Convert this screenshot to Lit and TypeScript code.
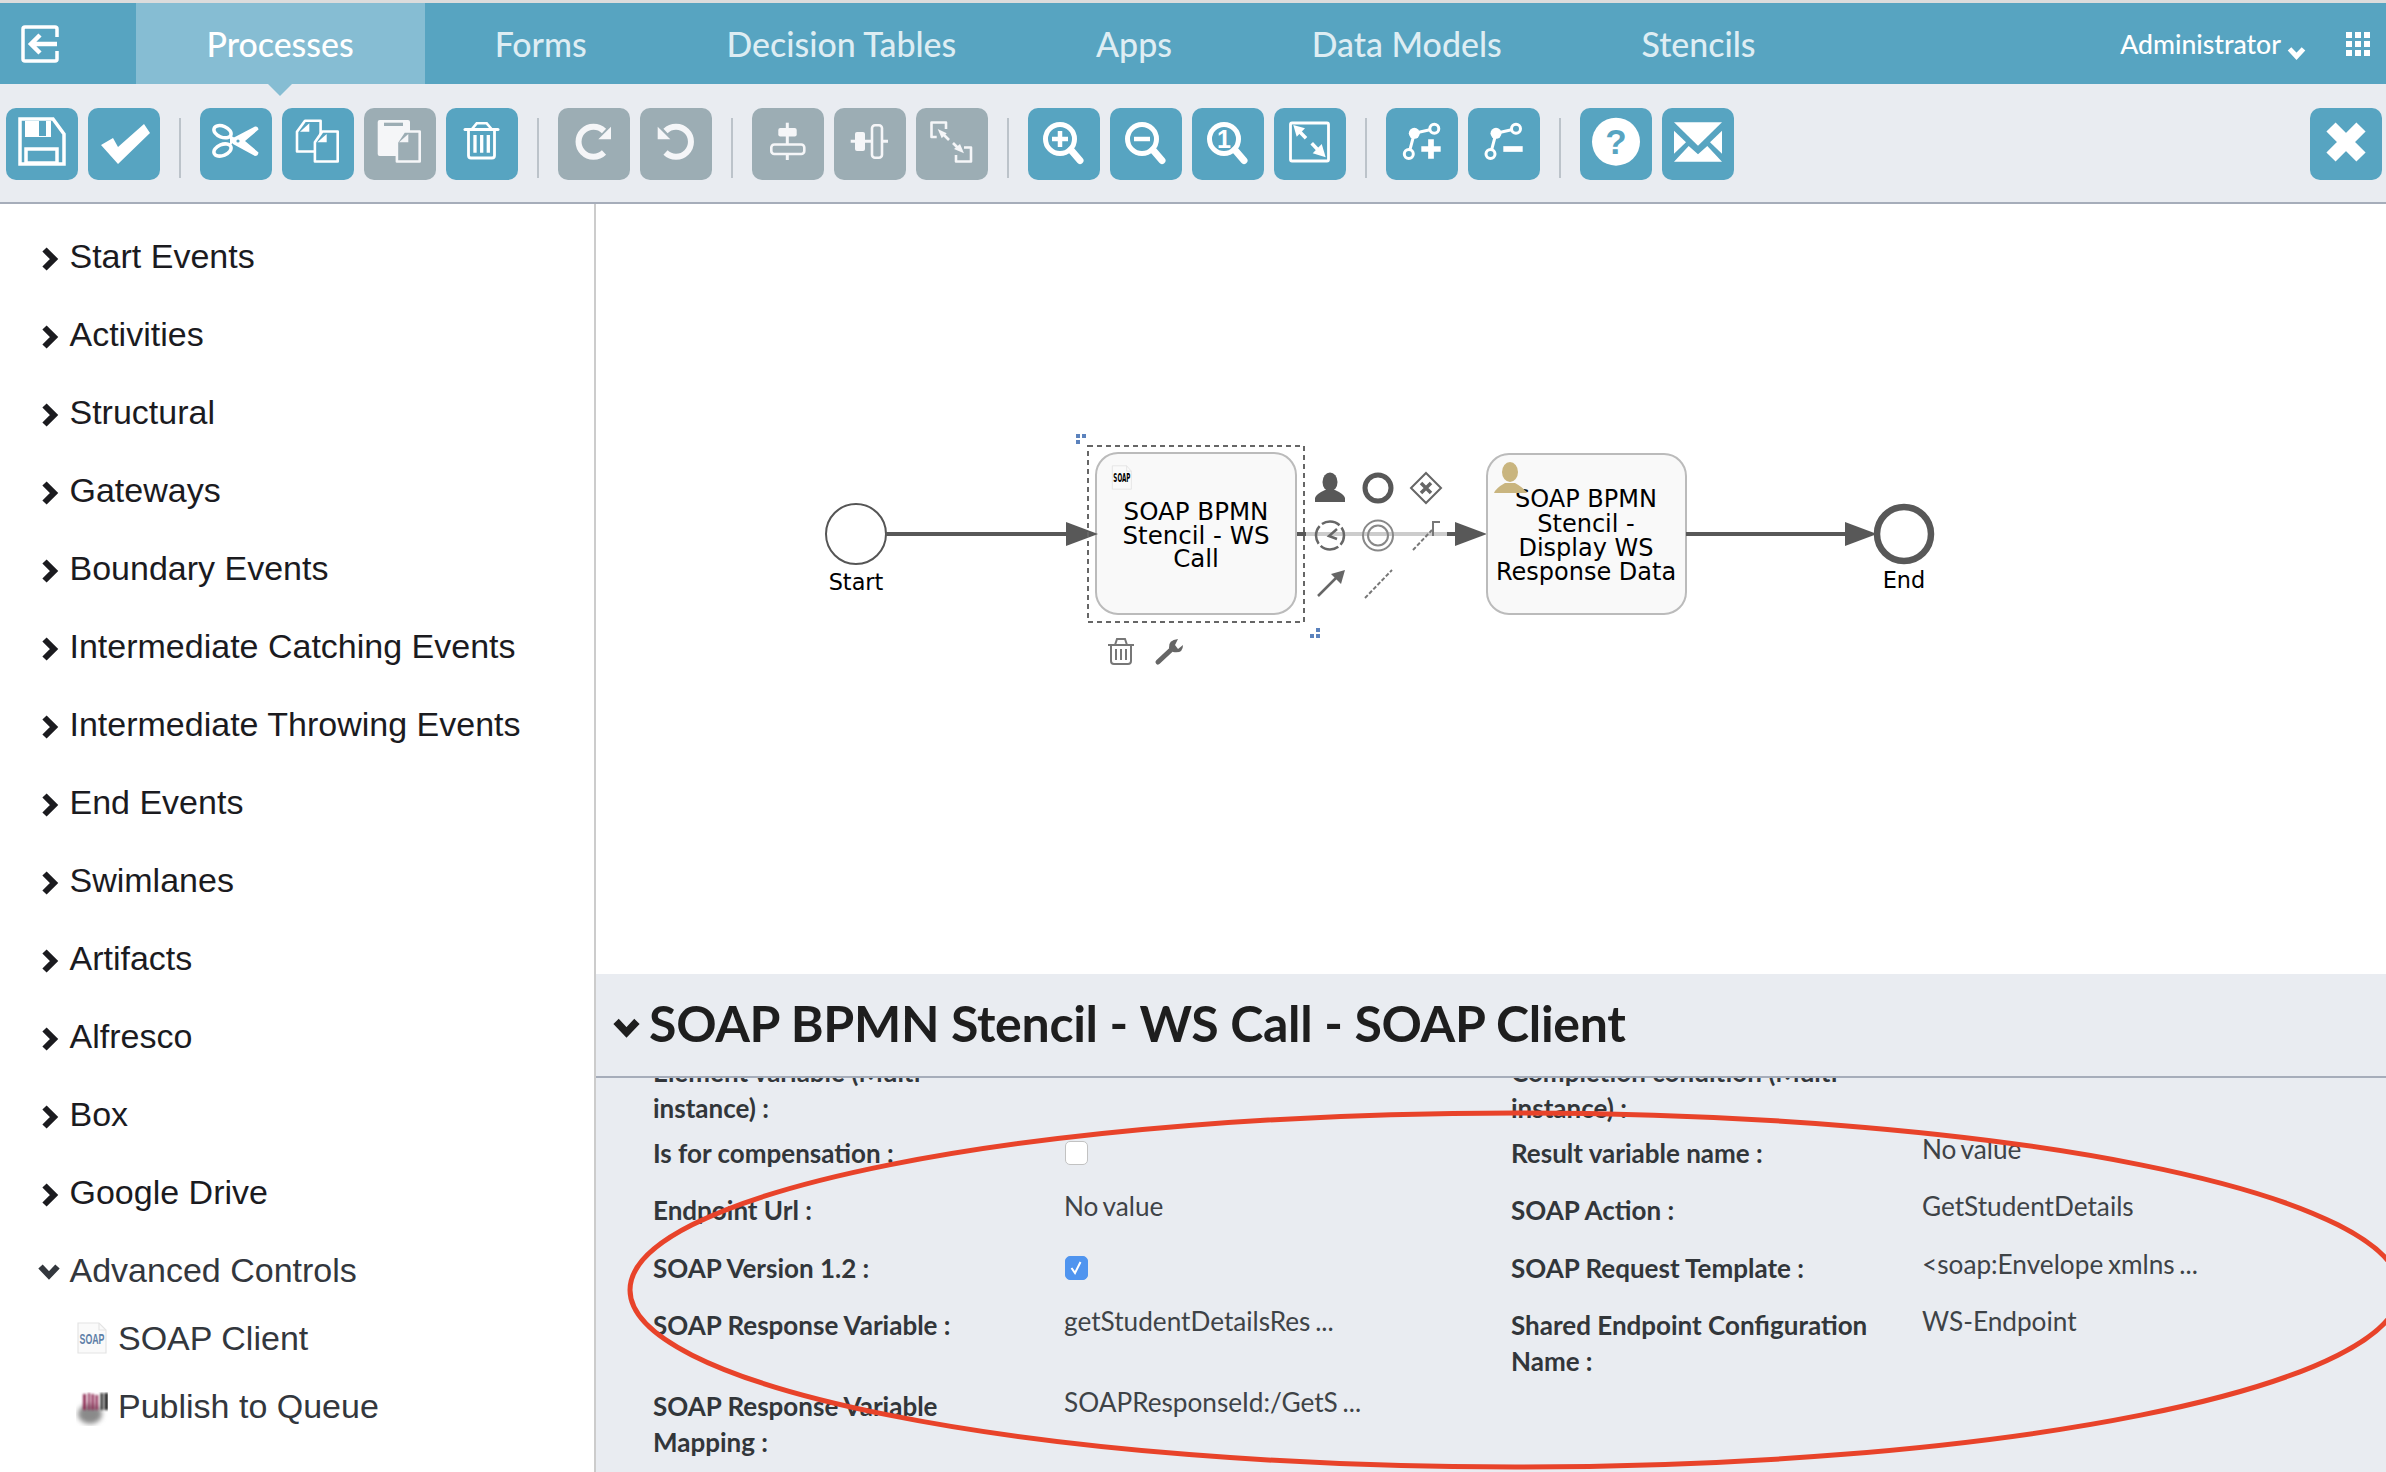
import { LitElement, html, css, svg } from "lit";
import { customElement } from "lit/decorators.js";

const W = "#fff";
const G = "#f5f6f8";
const BL = "#57a4c1";
const GR = "#9cadb4";
const zoomBase = svg`<circle cx="32" cy="31" r="14.5" fill="none" stroke="${W}" stroke-width="5"/><path d="M43 42 L52 52.5" stroke="${W}" stroke-width="7" stroke-linecap="round"/>`;
const bendBase = (x: number) => svg`<path d="M${x + 25.5} 20.7L${x + 5.5} 25.3L${x} 46" fill="none" stroke="${W}" stroke-width="3"/><circle cx="${x + 25.5}" cy="20.7" r="4.5" fill="${BL}" stroke="${W}" stroke-width="3"/><circle cx="${x + 5.5}" cy="25.3" r="5.5" fill="${W}"/><circle cx="${x}" cy="46" r="4.5" fill="${BL}" stroke="${W}" stroke-width="3"/>`;

const icons: Record<string, unknown> = {
  save: svg`<path d="M14 11H47L58 26V56H14Z" fill="none" stroke="${W}" stroke-width="3.5"/><path d="M19 13H33V28H40V13H45V29H19Z" fill="${W}"/><rect x="20" y="41" width="31" height="14" fill="none" stroke="${W}" stroke-width="3.5"/>`,
  ok: svg`<polygon points="13,37 25,30 30,39 56,16 62,25 30,56" fill="${W}"/>`,
  cut: svg`<ellipse cx="22.5" cy="23.7" rx="9" ry="5.5" transform="rotate(22 22.5 23.7)" fill="none" stroke="${W}" stroke-width="3.5"/><ellipse cx="22.5" cy="42" rx="9" ry="5.5" transform="rotate(-22 22.5 42)" fill="none" stroke="${W}" stroke-width="3.5"/><path d="M30 27L38 32L30 37Z" fill="${W}"/><path d="M33 30L55 18.5Q58 18 58.5 21.5L45 33L58.5 44.5Q58 48 55 48L33 36Z" fill="${W}"/><circle cx="38" cy="33" r="1.6" fill="${BL}"/>`,
  copy: svg`<path d="M23 12.8H38.6V43.5H15V23.7Z" fill="none" stroke="${W}" stroke-width="2.6" stroke-linejoin="round"/><polygon points="18,23.7 27.3,23.7 27.3,15.3" fill="${W}"/><path d="M40.3 23.5H55.7V53.5H32.9V34.3Z" fill="${BL}" stroke="${W}" stroke-width="2.6" stroke-linejoin="round"/><polygon points="35.3,34.3 44.7,34.3 44.7,26" fill="${W}"/>`,
  paste: svg`<rect x="13.7" y="12" width="32.3" height="36" rx="2" fill="${G}"/><rect x="20" y="14.7" width="19" height="3.3" fill="${GR}"/><path d="M40 23.5H55.7V53.5H32.9V34.3Z" fill="${GR}" stroke="${G}" stroke-width="2.6" stroke-linejoin="round"/><polygon points="35,34.3 44.3,34.3 44.3,26" fill="${G}"/>`,
  trash: svg`<path d="M26 21L30.7 15.3H40.7L45.5 21" fill="none" stroke="${W}" stroke-width="2.6"/><path d="M19 21.5H52" stroke="${W}" stroke-width="3" stroke-linecap="round"/><path d="M22.5 23V47.5Q22.5 50 25 50H46Q48.5 50 48.5 47.5V23" fill="none" stroke="${W}" stroke-width="2.8"/><path d="M29 27V44.7M35.7 27V44.7M42.3 27V44.7" stroke="${W}" stroke-width="3.3"/>`,
  redo: svg`<path d="M46 23A15 15 0 1 0 46 44.5" fill="none" stroke="${G}" stroke-width="6"/><polygon points="53,18.7 53,31.3 40.3,31.3" fill="${G}"/>`,
  undo: svg`<path d="M25.5 23A15 15 0 1 1 25.5 44.5" fill="none" stroke="${G}" stroke-width="6"/><polygon points="17.7,18.7 17.7,31.3 30.3,31.3" fill="${G}"/>`,
  alignH: svg`<path d="M35.3 14.7V52" stroke="${G}" stroke-width="3"/><rect x="26.3" y="20" width="18.4" height="8.5" rx="2" fill="${G}"/><rect x="19.3" y="36.5" width="33" height="9.5" rx="3" fill="${GR}" stroke="${G}" stroke-width="2.6"/>`,
  alignV: svg`<path d="M16.7 33.3H54" stroke="${G}" stroke-width="3"/><rect x="21" y="24" width="10" height="19" rx="2" fill="${G}"/><rect x="38" y="17.3" width="10" height="32.5" rx="3" fill="${GR}" stroke="${G}" stroke-width="2.6"/>`,
  same: svg`<path d="M20.7 29H15.5V14.5H30V21" fill="none" stroke="${G}" stroke-width="2.6" stroke-linejoin="round"/><path d="M48 39.5H55V53.5H40V47" fill="none" stroke="${G}" stroke-width="2.6" stroke-linejoin="round"/><polygon points="21.7,21 30.7,25.3 25.7,30.3" fill="${G}"/><path d="M27 26L33 32" stroke="${G}" stroke-width="2.6"/><polygon points="48,45.3 38,41 44,36" fill="${G}"/><path d="M37 35L43 41" stroke="${G}" stroke-width="2.6"/>`,
  zoomIn: svg`${zoomBase}<path d="M24 31H40M32 23V39" stroke="${W}" stroke-width="4.5"/>`,
  zoomOut: svg`${zoomBase}<path d="M24 31H40" stroke="${W}" stroke-width="4.5"/>`,
  zoom1: svg`${zoomBase}<text x="32" y="40" text-anchor="middle" font-family="Liberation Sans" font-size="25" font-weight="700" fill="${W}">1</text>`,
  fit: svg`<rect x="16.5" y="15" width="38" height="38" rx="1.5" fill="none" stroke="${W}" stroke-width="2.8"/><polygon points="19.3,17 31,20.3 22.7,28.7" fill="${W}"/><path d="M25 23L32 30.3" stroke="${W}" stroke-width="3.5"/><polygon points="51.7,49.3 38.7,45.3 47.7,36" fill="${W}"/><path d="M37.7 35.3L45 43" stroke="${W}" stroke-width="3.5"/>`,
  bendAdd: svg`${bendBase(22.8)}<path d="M35.3 41H54.7M45 31.3V50.7" stroke="${W}" stroke-width="5.7"/>`,
  bendDel: svg`${bendBase(22.5)}<path d="M35.3 41H54.7" stroke="${W}" stroke-width="5.7"/>`,
  help: svg`<circle cx="36" cy="33.7" r="24" fill="${W}"/><text x="36" y="46" text-anchor="middle" font-family="Liberation Sans" font-size="35" font-weight="700" fill="${BL}">?</text>`,
  mail: svg`<polygon points="12,14.3 60,14.3 36,37.7" fill="${W}"/><polygon points="12,22.7 24,34.3 12,45.7" fill="${W}"/><polygon points="60,22.7 48,34.3 60,45.7" fill="${W}"/><polygon points="12,53.7 26.7,38 36,46.3 45.3,38 60,53.7" fill="${W}"/>`,
  close: svg`<path d="M21 19L51 49M51 19L21 49" stroke="${W}" stroke-width="13"/>`,
};

type Tool = { i: string; gray?: boolean } | "sep";
const tools: Tool[] = [
  { i: "save" }, { i: "ok" }, "sep",
  { i: "cut" }, { i: "copy" }, { i: "paste", gray: true }, { i: "trash" }, "sep",
  { i: "redo", gray: true }, { i: "undo", gray: true }, "sep",
  { i: "alignH", gray: true }, { i: "alignV", gray: true }, { i: "same", gray: true }, "sep",
  { i: "zoomIn" }, { i: "zoomOut" }, { i: "zoom1" }, { i: "fit" }, "sep",
  { i: "bendAdd" }, { i: "bendDel" }, "sep",
  { i: "help" }, { i: "mail" },
];

const groups = ["Start Events", "Activities", "Structural", "Gateways", "Boundary Events", "Intermediate Catching Events",
  "Intermediate Throwing Events", "End Events", "Swimlanes", "Artifacts", "Alfresco", "Box", "Google Drive"];

const rows: [string, unknown, string, unknown][] = [
  ["Element variable (Multi-instance) :", "No value", "Completion condition (Multi-instance) :", "No value"],
  ["Is for compensation :", "off", "Result variable name :", "No value"],
  ["Endpoint Url :", "No value", "SOAP Action :", "GetStudentDetails"],
  ["SOAP Version 1.2 :", "on", "SOAP Request Template :", "<soap:Envelope xmlns ..."],
  ["SOAP Response Variable :", "getStudentDetailsRes ...", "Shared Endpoint Configuration Name :", "WS-Endpoint"],
  ["SOAP Response Variable Mapping :", "SOAPResponseId:/GetS ...", "", ""],
];

const soapIcon = svg`<path d="M2 1H23L30 8V31H2Z" fill="#fafafa" stroke="#e4e4e4" stroke-width="1.2"/><path d="M23 1V8H30" fill="none" stroke="#e4e4e4" stroke-width="1.2"/><text x="16" y="21.5" text-anchor="middle" font-family="Liberation Sans" font-size="15" font-weight="700" textLength="25" lengthAdjust="spacingAndGlyphs" fill="#5f80a8">SOAP</text>`;

@customElement("app-root")
export class AppRoot extends LitElement {
  static styles = css`
    :host { display: block; position: relative; width: 2386px; height: 1472px; overflow: hidden; background: #fff; font-family: "Liberation Sans", Arial, sans-serif; }
    .page { display: flex; flex-direction: column; height: 100%; }
    .strip { height: 3px; background: #dcdcdc; flex: none; }
    .nav { flex: none; height: 81px; background: #57a4c1; display: flex; align-items: stretch; position: relative; font-family: Lato, sans-serif; }
    .back { width: 136px; display: flex; align-items: center; padding-left: 20px; box-sizing: border-box; }
    .tab { display: flex; align-items: center; padding: 0 69.9px; font-size: 33.9px; font-weight: 500; color: #deedf3; position: relative; }
    .tab.on { background: #86bdd3; color: #fff; padding-right: 71px; padding-left: 70.5px; }
    .tab.on::after { content: ""; position: absolute; left: 50%; margin-left: -12px; top: 100%; border: 12px solid transparent; border-top-color: #86bdd3; border-bottom: 0; }
    .user { margin-left: auto; display: flex; align-items: center; color: #fff; font-size: 26.6px; font-weight: 500; padding-right: 16px; }
    .user .chev { margin: 12px 40px 0 6px; }
    .grid9 { display: grid; grid-template-columns: repeat(3, 6px); gap: 3px; }
    .grid9 i { width: 6px; height: 6px; background: #fff; display: block; }
    .toolbar { flex: none; box-sizing: border-box; height: 120px; background: #e9ecf1; border-bottom: 2px solid #a6adba; display: flex; align-items: flex-start; gap: 10px; padding: 24px 4px 0 6px; }
    .btn { width: 72px; height: 72px; border-radius: 10px; background: #57a4c1; flex: none; }
    .btn.gray { background: #9cadb4; }
    .btn svg { display: block; width: 72px; height: 72px; }
    .sep { width: 2px; height: 60px; margin: 10px 9px 0; background: #bcc3ca; flex: none; }
    .close { margin-left: auto; }
    .main { flex: 1; display: flex; min-height: 0; }
    .side { flex: none; box-sizing: border-box; width: 596px; border-right: 2px solid #ccc; padding-top: 13px; font-size: 34px; color: #1b1b1f; }
    .grp { height: 78px; display: flex; align-items: center; padding-left: 41px; }
    .grp svg { flex: none; margin: 5px 10.5px 0 0; }
    .grp.open { color: #33373d; padding-left: 38px; }
    .grp.open svg { margin: 3px 9.5px 0 0; }
    .subs { margin-top: -5px; color: #33373d; }
    .sub { height: 68px; display: flex; align-items: center; padding-left: 76px; gap: 10px; }
    .sub svg { flex: none; }
    .sub svg.pub { margin-top: 6px; }
    .right { flex: 1; display: flex; flex-direction: column; min-width: 0; }
    .canvas { flex: none; height: 770px; }
    .canvas svg { display: block; }
    .canvas text { font-family: "DejaVu Sans", sans-serif; fill: #000; text-anchor: middle; }
    .panel { flex: 1; background: #e9ecf1; display: flex; flex-direction: column; min-height: 0; font-family: Lato, sans-serif; }
    .head { flex: none; box-sizing: border-box; height: 104px; border-bottom: 2px solid #a6adba; display: flex; align-items: center; padding: 0 0 4px 17px; gap: 9px; font-size: 50px; letter-spacing: -0.3px; font-weight: 700; color: #1e1e1e; }
    .head svg { margin-top: 8px; }
    .fields { flex: 1; overflow: hidden; }
    .inner { margin-top: -24.5px; padding-left: 57px; }
    .row { display: grid; grid-template-columns: 412px 446px 412px 1fr; min-height: 57.5px; align-items: start; }
    .lab { width: 375px; font-size: 26px; line-height: 36px; font-weight: 700; color: #32363a; padding-bottom: 9px; }
    .val { font-size: 26.2px; line-height: 36px; word-spacing: -2px; color: #3e4347; margin: -4px 0 0 -1px; }
    .cb { display: block; box-sizing: border-box; width: 23px; height: 24px; border-radius: 5px; margin: 10px 0 0 1px; background: #fff; border: 1.5px solid #c2c2c2; }
    .cb.on { background: #4f94ef; border-color: #4f94ef; }
    .cb svg { display: block; }
    .mark { position: absolute; left: 0; top: 0; pointer-events: none; }
  `;

  private chevR() {
    return html`<svg width="18" height="24" viewBox="0 0 18 24"><path d="M3.5 2.5L13 12L3.5 21.5" fill="none" stroke="currentColor" stroke-width="6"/></svg>`;
  }
  private chevD(w = 22, h = 17, sw = 6) {
    return html`<svg width="${w}" height="${h}" viewBox="0 0 22 17"><path d="M2.5 3.5L11 12.5L19.5 3.5" fill="none" stroke="currentColor" stroke-width="${sw}"/></svg>`;
  }

  private renderVal(v: unknown) {
    if (v === "off") return html`<span class="cb"></span>`;
    if (v === "on") return html`<span class="cb on"><svg width="20" height="21" viewBox="0 0 20 20"><path d="M5.5 10.5L9 15.5L14.5 4.5" fill="none" stroke="#fff" stroke-width="2"/></svg></span>`;
    return v;
  }

  private diagram() {
    const arrow = (x1: number, x2: number, y: number) => svg`<polygon points="${x1},${y - 12} ${x2},${y} ${x1},${y + 12}" fill="#585858"/>`;
    const person = svg`<ellipse cx="1330" cy="482" rx="7.5" ry="9.5" fill="#585858"/><path d="M1315 502V498Q1316 494 1325 490H1335Q1344 494 1345 498V502Z" fill="#585858"/>`;
    return svg`
      <circle cx="856" cy="534" r="30" fill="#fff" stroke="#555" stroke-width="2"/>
      <text x="856" y="590" font-size="22.4">Start</text>
      <path d="M886 534H1068" stroke="#585858" stroke-width="4"/>

      <rect x="1096" y="453" width="200" height="161" rx="22" fill="#f9f9f9" stroke="#bbb" stroke-width="2"/>
      ${arrow(1066, 1098, 534)}
      <rect x="1088" y="446" width="216" height="176" fill="none" stroke="#666" stroke-width="2" stroke-dasharray="5 4"/>
      <g transform="translate(1111 465) scale(.68 .78)">${soapIcon}</g>
      <text font-size="24.5"><tspan x="1196" y="519.5">SOAP BPMN</tspan><tspan x="1196" y="544">Stencil - WS</tspan><tspan x="1196" y="567">Call</tspan></text>
      <g fill="#5b82bd"><rect x="1076" y="434" width="4" height="4"/><rect x="1082" y="434" width="4" height="4"/><rect x="1076" y="440" width="4" height="4"/>
      <rect x="1316" y="628" width="4" height="4"/><rect x="1310" y="634" width="4" height="4"/><rect x="1316" y="634" width="4" height="4"/></g>

      <path d="M1297 534H1306" stroke="#585858" stroke-width="4"/>
      <path d="M1306 534H1447" stroke="#ccc" stroke-width="4"/>
      <path d="M1447 534H1458" stroke="#585858" stroke-width="4"/>
      ${arrow(1455, 1487, 534)}

      <g fill="none" stroke="#777" stroke-width="2">
        <path d="M1108 645H1134M1115 645L1117 639H1125L1127 645"/>
        <path d="M1111 646V661Q1111 664 1114 664H1128Q1131 664 1131 661V646"/>
        <path d="M1116 649V660M1121 649V660M1126 649V660"/>
      </g>
      <path d="M1158 662L1173 648" stroke="#666" stroke-width="5" stroke-linecap="round"/>
      <path d="M1169 648Q1168 640 1178 639L1175 645L1178 649L1183 645Q1183 654 1173 652Z" fill="#666"/>

      ${person}
      <circle cx="1378" cy="488" r="13" fill="none" stroke="#585858" stroke-width="5"/>
      <g fill="none" stroke="#666" stroke-width="2"><polygon points="1426,473 1441,488 1426,503 1411,488"/></g>
      <path d="M1421 483L1431 493M1431 483L1421 493" stroke="#666" stroke-width="3.5"/>

      <circle cx="1330" cy="535.5" r="14" fill="none" stroke="#666" stroke-width="2.5" stroke-dasharray="19 3" stroke-dashoffset="9"/>
      <path d="M1337 529L1329 536L1337 539" fill="none" stroke="#666" stroke-width="2.5"/>
      <circle cx="1378" cy="535.5" r="15" fill="none" stroke="#888" stroke-width="2"/>
      <circle cx="1378" cy="535.5" r="10" fill="none" stroke="#888" stroke-width="2"/>
      <path d="M1413 550L1432 530" stroke="#777" stroke-width="2" stroke-dasharray="4 2"/>
      <path d="M1440 522H1433V536" fill="none" stroke="#777" stroke-width="2"/>

      <path d="M1318 596L1338 576" stroke="#666" stroke-width="2.5"/>
      <polygon points="1345,570 1341,584 1331,574" fill="#666"/>
      <path d="M1365 598L1392 570" stroke="#777" stroke-width="2" stroke-dasharray="4 2"/>

      <rect x="1487" y="454" width="199" height="160" rx="22" fill="#f9f9f9" stroke="#bbb" stroke-width="2"/>
      <text font-size="24"><tspan x="1586" y="507">SOAP BPMN</tspan><tspan x="1586" y="532">Stencil -</tspan><tspan x="1586" y="555.5">Display WS</tspan><tspan x="1586" y="580">Response Data</tspan></text>
      <ellipse cx="1510" cy="472" rx="8" ry="10" fill="#c9b57f"/>
      <path d="M1494 493Q1496 488 1505 483H1515Q1524 488 1527 493Z" fill="#c9b57f"/>

      <path d="M1686 534H1848" stroke="#585858" stroke-width="4"/>
      ${arrow(1845, 1877, 534)}
      <circle cx="1904" cy="534" r="27" fill="#fff" stroke="#585858" stroke-width="6.5"/>
      <text x="1904" y="588" font-size="22.4">End</text>
    `;
  }

  render() {
    return html`
      <div class="page">
        <div class="strip"></div>
        <div class="nav">
          <div class="back">
            <svg width="40" height="38" viewBox="0 0 40 38" fill="none" stroke="#fff" stroke-width="3.5">
              <path d="M37 12V4Q37 2 35 2H5Q3 2 3 4V34Q3 36 5 36H35Q37 36 37 34V26"/>
              <path d="M37 19H12M20 10L11 19L20 28" stroke-width="4.5"/>
            </svg>
          </div>
          ${["Processes", "Forms", "Decision Tables", "Apps", "Data Models", "Stencils"].map(
            (t, i) => html`<div class="tab ${i === 0 ? "on" : ""}">${t}</div>`)}
          <div class="user">
            <span>Administrator</span>
            <span class="chev">${this.chevD(19, 14, 6)}</span>
            <div class="grid9">${Array.from({ length: 9 }, () => html`<i></i>`)}</div>
          </div>
        </div>
        <div class="toolbar">
          ${tools.map((t) => t === "sep"
            ? html`<div class="sep"></div>`
            : html`<div class="btn ${t.gray ? "gray" : ""}"><svg viewBox="0 0 72 72">${icons[t.i]}</svg></div>`)}
          <div class="btn close"><svg viewBox="0 0 72 72">${icons.close}</svg></div>
        </div>
        <div class="main">
          <div class="side">
            ${groups.map((g) => html`<div class="grp">${this.chevR()}<span>${g}</span></div>`)}
            <div class="grp open">${this.chevD(22, 17, 6)}<span>Advanced Controls</span></div>
            <div class="subs">
              <div class="sub"><svg width="32" height="32" viewBox="0 0 32 32">${soapIcon}</svg><span>SOAP Client</span></div>
              <div class="sub">
                <svg class="pub" width="32" height="34" viewBox="0 0 32 34">
                  <defs>
                    <filter id="bl" x="-40%" y="-40%" width="180%" height="180%"><feGaussianBlur stdDeviation="2.6"/></filter>
                    <filter id="bs" x="-10%" y="-10%" width="120%" height="120%"><feGaussianBlur stdDeviation="1"/></filter>
                  </defs>
                  <ellipse cx="14" cy="22" rx="12" ry="10" fill="#8a8a8a" filter="url(#bl)"/>
                  <g filter="url(#bs)">
                    <path d="M7 2H10V18H7ZM12 1H14V18H12ZM15.5 2H18V18H15.5ZM19.5 3H22V18H19.5Z" fill="#8e2a52"/>
                    <path d="M24.5 1H27V18H24.5ZM28.5 1H32V18H28.5Z" fill="#222"/>
                  </g>
                </svg>
                <span>Publish to Queue</span>
              </div>
            </div>
          </div>
          <div class="right">
            <div class="canvas">
              <svg width="1790" height="770" viewBox="596 204 1790 770">${this.diagram()}</svg>
            </div>
            <div class="panel">
              <div class="head">${this.chevD(27, 21, 6)}<span>SOAP BPMN Stencil - WS Call - SOAP Client</span></div>
              <div class="fields">
                <div class="inner">
                  ${rows.map((r) => html`<div class="row">
                    <div class="lab">${r[0]}</div>
                    <div class="val">${this.renderVal(r[1])}</div>
                    <div class="lab">${r[2]}</div>
                    <div class="val">${this.renderVal(r[3])}</div>
                  </div>`)}
                </div>
              </div>
            </div>
          </div>
        </div>
      </div>
      <svg class="mark" width="2386" height="1472" viewBox="0 0 2386 1472">
        <ellipse cx="1515" cy="1290" rx="885" ry="177" fill="none" stroke="#e8432a" stroke-width="5"/>
      </svg>
    `;
  }
}
